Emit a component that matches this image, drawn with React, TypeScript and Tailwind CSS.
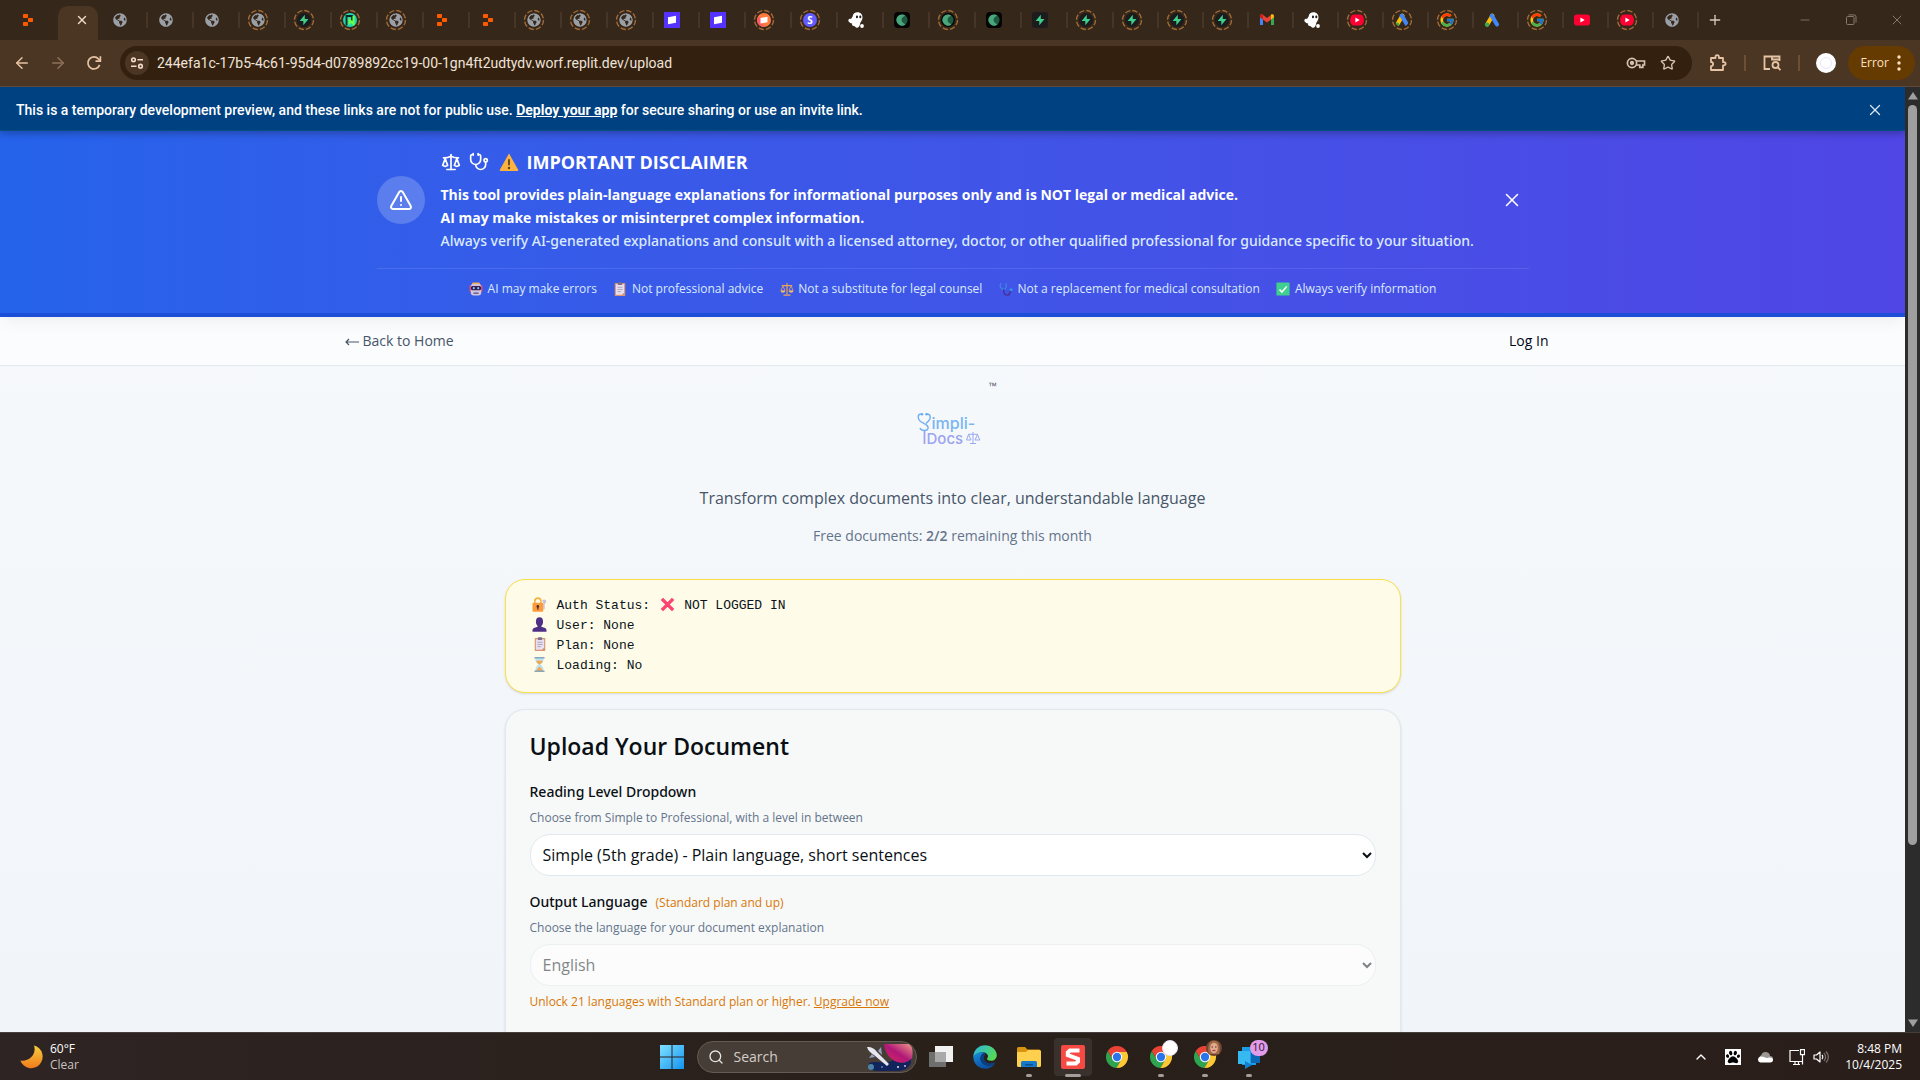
import React from "react";
import {
  ArrowLeft,
  ArrowRight,
  ChevronUp,
  Minus,
  Plus,
  Scale,
  Search,
  Star,
  Stethoscope,
  TriangleAlert,
  X,
} from "lucide-react";
import { FaGlobeAmericas, FaPaw } from "react-icons/fa";
import { FcGoogle } from "react-icons/fc";

/* ---------- favicons ---------- */

function Replit() {
  return (
    <svg viewBox="0 0 16 16" className="size-4" fill="#ff5a00">
      <rect x="3" y="2" width="5" height="4" rx="0.8" />
      <rect x="8" y="6" width="5" height="4" rx="0.8" />
      <rect x="3" y="10" width="5" height="4" rx="0.8" />
    </svg>
  );
}

function Globe() {
  return <FaGlobeAmericas className="size-[14px] text-[#9ba0a7]" />;
}

function Bolt() {
  return (
    <svg viewBox="0 0 16 16" className="size-4">
      <rect width="16" height="16" rx="3" fill="#1c1c1c" />
      <path d="M8.8 2.8 3.6 8.9h3.7v4.4l5.2-6.2H8.8z" fill="#3ecf8e" />
    </svg>
  );
}

function Neon() {
  return (
    <svg viewBox="0 0 16 16" className="size-4" fill="none">
      <circle cx="8" cy="8" r="8" fill="#1fd5b0" />
      <path d="M4.500 13.500V4h5.500v4.500" stroke="#0d2a22" strokeWidth="1.800" />
      <path d="M7.500 12.500V8l4 4V4" stroke="#6dff45" strokeWidth="2" />
    </svg>
  );
}

function Violet() {
  return (
    <svg viewBox="0 0 16 16" className="size-4">
      <rect width="16" height="16" fill="#5533ff" />
      <path d="M4 5.300 12 3.800v7L4 12.300z" fill="#fff" />
    </svg>
  );
}

function Orange() {
  return (
    <svg viewBox="0 0 16 16" className="size-4">
      <circle cx="8" cy="8" r="8" fill="#ff7a3c" />
      <path d="M2 4a8 8 0 0 0 6 12L6 8z" fill="#ff5a6a" />
      <path d="M4.500 6 11.500 4.700v5.600l-7 1.300z" fill="#fff" />
    </svg>
  );
}

function SLetter() {
  return (
    <span className="flex size-4 items-center justify-center bg-[#635bff] text-[10px] leading-none font-bold text-white">S</span>
  );
}

function Ghost() {
  return (
    <svg viewBox="0 0 16 16" className="size-4">
      <path d="M4.600 4.500C5 1.500 7 .3 9.500.3c3 0 5 2.200 5 5.200 0 3-2 4-2.500 6.500-.5 2.500-1.500 3.700-3 3.700-1.600 0-2-1.700-3.200-1.700-1.300 0-2.300-1-1.600-2.500C2.500 11.400.3 10.200.3 8.600c0-1.700 1.700-2 2.700-1.700z" fill="#fff" />
      <circle cx="14" cy="14" r="1.900" fill="#fff" />
      <rect x="8" y="3.600" width="2" height="2.600" rx="0.900" fill="#222" />
      <rect x="11.300" y="3.600" width="2" height="2.600" rx="0.900" fill="#222" />
    </svg>
  );
}

function Moonlet() {
  return (
    <svg viewBox="0 0 16 16" className="size-4">
      <rect width="16" height="16" rx="4" fill="#050505" />
      <circle cx="8" cy="8" r="5.600" fill="#1d5a40" />
      <path d="M8 2.400a5.600 5.600 0 1 0 3.500 10C8.500 11 7.500 9.500 7.500 7.800S8.800 4.500 11.300 3.400A5.600 5.600 0 0 0 8 2.400" fill="#4aa77c" />
    </svg>
  );
}

function Gmail() {
  return (
    <svg viewBox="0 0 16 16" className="size-4">
      <path d="M1 4v9h3V7.200z" fill="#4285f4" />
      <path d="M15 4v9h-3V7.200z" fill="#34a853" />
      <path d="M1 5V3.600c0-1.300 1.500-1.900 2.500-1.100L8 6l4.500-3.500V7.200L8 10.500 3.500 7.200z" fill="#ea4335" />
      <path d="M12 7.500V2.700c1.200-1 3-.3 3 1.300v1.200z" fill="#fbbc04" />
      <path d="M4 7.500V2.700C2.800 1.700 1 2.400 1 4v1.200z" fill="#c5221f" />
    </svg>
  );
}

function Ads() {
  return (
    <svg viewBox="0 0 16 16" className="size-4">
      <path d="M8.400 3.700 3.200 12.500" stroke="#fbbc04" strokeWidth="4.200" strokeLinecap="round" />
      <path d="m7.800 3.700 5.200 8.800" stroke="#4285f4" strokeWidth="4.200" strokeLinecap="round" />
      <circle cx="3.100" cy="12.600" r="2.200" fill="#34a853" />
    </svg>
  );
}

function YouTube() {
  return (
    <svg viewBox="0 0 16 16" className="size-4">
      <rect y="2.400" width="16" height="11.200" rx="2.800" fill="#ff0033" />
      <path d="m6.400 5.600 4.300 2.400-4.300 2.400z" fill="#fff" />
    </svg>
  );
}

/* ---------- browser chrome ---------- */

type Tab = { icon: React.ComponentType; ring?: boolean };

const wideTabs: Tab[] = [
  { icon: Globe },
  { icon: Globe },
  { icon: Globe },
  { icon: Globe, ring: true },
  { icon: Bolt, ring: true },
  { icon: Neon, ring: true },
  { icon: Globe, ring: true },
  { icon: Replit },
  { icon: Replit },
  { icon: Globe, ring: true },
  { icon: Globe, ring: true },
  { icon: Globe, ring: true },
  { icon: Violet },
  { icon: Violet },
  { icon: Orange, ring: true },
  { icon: SLetter, ring: true },
  { icon: Ghost },
  { icon: Moonlet },
  { icon: Moonlet, ring: true },
  { icon: Moonlet },
  { icon: Bolt },
  { icon: Bolt, ring: true },
];

const narrowTabs: Tab[] = [
  { icon: Bolt, ring: true },
  { icon: Bolt, ring: true },
  { icon: Bolt, ring: true },
  { icon: Gmail },
  { icon: Ghost },
  { icon: YouTube, ring: true },
  { icon: Ads, ring: true },
  { icon: FcGoogle, ring: true },
  { icon: Ads },
  { icon: FcGoogle, ring: true },
  { icon: YouTube },
  { icon: YouTube, ring: true },
  { icon: Globe },
];

function TabButton({ tab, narrow }: { tab: Tab; narrow?: boolean }) {
  const Icon = tab.icon;
  return (
    <button
      type="button"
      aria-label="Tab"
      className={`flex h-5 shrink-0 items-center justify-between pl-2 ${narrow ? "w-[45px]" : "w-[46px]"}`}
    >
      <span className="relative flex size-5 items-center justify-center">
        <span className={`flex items-center justify-center ${tab.ring ? "size-4 rounded-full [clip-path:circle(7px)]" : "size-4"}`}>
          <Icon />
        </span>
        {tab.ring && (
          <svg viewBox="0 0 22 22" className="absolute -inset-px size-[22px]" fill="none">
            <circle cx="11" cy="11" r="9.500" stroke="#a06a38" strokeWidth="1.400" strokeDasharray="5.500 1.960" />
          </svg>
        )}
      </span>
      <span className="h-4 w-[2px] bg-[#453629]" />
    </button>
  );
}

function TabStrip() {
  return (
    <div className="flex h-10 shrink-0 items-center bg-[#35271a]">
      <button type="button" aria-label="Tab" className="flex h-10 w-[58px] shrink-0 items-center pl-5">
        <Replit />
      </button>
      <div className="flex h-10 w-10 shrink-0 items-end">
        <div className="flex h-[34px] w-10 items-center justify-center rounded-t-[10px] bg-[#4b3624] pb-[6px] pl-2">
          <button type="button" aria-label="Close tab" className="text-[#f0d9c4]">
            <X className="size-[14px]" strokeWidth={2.5} />
          </button>
        </div>
      </div>
      <div className="flex min-w-0 flex-1 items-center pl-1">
        {wideTabs.map((t, i) => (
          <TabButton key={i} tab={t} />
        ))}
        {narrowTabs.map((t, i) => (
          <TabButton key={i} tab={t} narrow />
        ))}
        <button type="button" aria-label="New tab" className="ml-2 shrink-0 text-[#d9cabc]">
          <Plus className="size-4" />
        </button>
      </div>
      <div className="flex shrink-0 text-[#85786c]">
        <button type="button" aria-label="Minimize" className="flex w-[46px] items-center justify-center">
          <Minus className="size-[14px]" strokeWidth={1.5} />
        </button>
        <button type="button" aria-label="Restore" className="flex w-[46px] items-center justify-center">
          <svg viewBox="0 0 12 12" className="size-3" fill="none" stroke="currentColor">
            <rect x="1.500" y="2.500" width="7.500" height="8" rx="1" />
            <path d="M3.500.9h5.500a2 2 0 0 1 2 2v5.600" />
          </svg>
        </button>
        <button type="button" aria-label="Close" className="flex w-[46px] items-center justify-center">
          <X className="size-4" strokeWidth={1.5} />
        </button>
      </div>
    </div>
  );
}

function Toolbar() {
  return (
    <div className="flex h-[47px] shrink-0 items-center border-b border-[#5f4a3a] bg-[#4b3624] text-[#e6c3a5]">
      <div className="flex w-[120px] shrink-0 items-center gap-[18px] pl-[13px]">
        <button type="button" aria-label="Back">
          <ArrowLeft className="size-[18px]" />
        </button>
        <button type="button" aria-label="Forward" className="text-[#8f7059]">
          <ArrowRight className="size-[18px]" />
        </button>
        <button type="button" aria-label="Reload">
          <svg viewBox="0 0 24 24" className="size-[18px]" fill="none" stroke="currentColor" strokeWidth="2.300">
            <path d="M19.500 14.500A8 8 0 1 1 18 6.700l2 2.300" />
            <path d="M20.500 3v6.500H14" />
          </svg>
        </button>
      </div>
      <div className="flex h-[34px] min-w-0 flex-1 items-center rounded-full bg-[#33200f] pr-4 pl-[5px]">
        <button type="button" aria-label="Site information" className="flex size-6 shrink-0 items-center justify-center rounded-full bg-[#4b3624] text-[#f3dcc8]">
          <svg viewBox="0 0 14 14" className="size-[14px]" fill="none" stroke="currentColor" strokeWidth="1.600">
            <circle cx="3.500" cy="3.800" r="1.800" />
            <path d="M7.500 3.800H13M1 10.200h5.500" />
            <circle cx="10.500" cy="10.200" r="1.800" />
          </svg>
        </button>
        <input
          aria-label="Address"
          readOnly
          value="244efa1c-17b5-4c61-95d4-d0789892cc19-00-1gn4ft2udtydv.worf.replit.dev/upload"
          className="ml-2 min-w-0 flex-1 bg-transparent font-[Roboto] text-sm text-[#efe3d8] outline-none"
        />
        <div className="flex items-center gap-[14px] text-[#d9c3b0]">
          <svg viewBox="0 0 20 14" className="h-[14px] w-5" fill="none" stroke="currentColor" strokeWidth="1.700">
            <circle cx="6" cy="7" r="4.600" />
            <circle cx="6" cy="7" r="1.300" fill="currentColor" />
            <path d="M10 5h8.500v4h-1.700v2.300h-3V9H10" />
          </svg>
          <Star className="size-4" strokeWidth={2} />
        </div>
      </div>
      <div className="flex shrink-0 items-center pr-[5px]">
        <svg viewBox="0 0 18 18" className="ml-[17px] size-[18px]" fill="none" stroke="currentColor" strokeWidth="1.800">
          <path d="M2 4h4.500V2.800a1.700 1.700 0 0 1 3.400 0V4H14v4.200h1a1.600 1.600 0 0 1 0 3.200h-1V16H2v-3.800c2.800 0 2.800-4.200 0-4.200z" strokeLinejoin="round" />
        </svg>
        <span className="ml-[17px] h-4 w-[2px] bg-[#6c4f36]" />
        <svg viewBox="0 0 18 18" className="ml-[17px] size-[18px]" fill="none" stroke="currentColor" strokeWidth="1.800">
          <path d="M7 15H1.500V2.500h15V7M9 2.500v3h7" />
          <circle cx="12.500" cy="11" r="3" />
          <path d="m14.700 13.200 2.800 3" />
        </svg>
        <span className="ml-[17px] h-4 w-[2px] bg-[#6c4f36]" />
        <span className="ml-4 flex size-5 items-center justify-center rounded-full bg-white">
          <span className="size-3 rounded-full border border-[#ebe6fb]" />
        </span>
        <button type="button" className="ml-3 flex h-[34px] items-center gap-2 rounded-full bg-[#663b02] pr-[14px] pl-3 text-xs text-[#ffe0c2]">
          Error
          <svg viewBox="0 0 4 16" className="h-4 w-1" fill="currentColor">
            <circle cx="2" cy="2" r="1.700" />
            <circle cx="2" cy="8" r="1.700" />
            <circle cx="2" cy="14" r="1.700" />
          </svg>
        </button>
      </div>
    </div>
  );
}

/* ---------- small pictograms ---------- */

function WarningSign() {
  return (
    <svg viewBox="0 0 20 20" className="size-5">
      <path d="M10 1.500 19.300 18a1 1 0 0 1-.9 1H1.600a1 1 0 0 1-.9-1z" fill="#ffb23e" />
      <rect x="9.100" y="7" width="1.800" height="6.500" rx="0.900" fill="#5d4422" />
      <circle cx="10" cy="16" r="1.200" fill="#5d4422" />
    </svg>
  );
}

function Robot() {
  return (
    <svg viewBox="0 0 16 16" className="size-[14px]">
      <rect x="3.500" y="0.500" width="9" height="4" rx="1.500" fill="#f9a83c" />
      <rect x="0.500" y="3.500" width="15" height="8" rx="1.500" fill="#e8406b" />
      <rect x="2" y="2" width="12" height="13.500" rx="3.500" fill="#cfc3de" />
      <rect x="2" y="4.500" width="12" height="5" rx="2" fill="#35204f" />
      <circle cx="5.500" cy="7" r="1.200" fill="#7cc7ff" />
      <circle cx="10.500" cy="7" r="1.200" fill="#7cc7ff" />
      <rect x="5" y="12" width="6" height="1.500" rx="0.700" fill="#5b4778" />
    </svg>
  );
}

function Clipboard() {
  return (
    <svg viewBox="0 0 16 16" className="size-[14px]">
      <rect x="2" y="1" width="12" height="15" rx="1" fill="#d99471" />
      <path d="M3.300 2.500h9.400V12l-2.500 2.700H3.300z" fill="#e9e0ef" />
      <rect x="5.500" y="0.300" width="5" height="3.200" rx="0.800" fill="#7c6f8b" />
      <path d="M5 6h6M5 8.500h6M5 11h4" stroke="#a79ab8" strokeWidth="1" />
    </svg>
  );
}

function Balance() {
  return (
    <svg viewBox="0 0 16 16" className="size-[14px]" fill="none" stroke="#e9a55b" strokeWidth="1.300">
      <path d="M8 1v13M2 4.200h12M4 15h8" />
      <path d="M3.300 4.500 1 10h4.700zM12.700 4.500 10.300 10H15z" strokeWidth="0.900" />
      <path d="M.7 10h5.200a2.600 2.200 0 0 1-5.200 0M10.100 10h5.200a2.600 2.200 0 0 1-5.200 0" fill="#f4bd65" stroke="none" />
    </svg>
  );
}

function StethoscopeMark() {
  return (
    <svg viewBox="0 0 16 16" className="size-[14px]" fill="none" strokeWidth="1.500">
      <path d="M2.500 1.500C0 4 2 8 5 8.500S9.500 4 7.500 1.500" stroke="#3c86e6" />
      <path d="M5.500 8.500c-.5 4 1 6.500 4 6.500 3.500 0 2.500-4 4-5" stroke="#4a2f9a" strokeWidth="1.700" />
      <circle cx="13.800" cy="8.800" r="1.700" fill="#2f96e8" />
    </svg>
  );
}

function CheckMark() {
  return (
    <svg viewBox="0 0 16 16" className="size-[14px]">
      <rect x="0.500" y="0.500" width="15" height="15" rx="1" fill="#3fd08f" />
      <path d="m4 8.500 2.800 3L12.300 5" fill="none" stroke="#fff" strokeWidth="1.700" />
    </svg>
  );
}

function Lock() {
  return (
    <svg viewBox="0 0 16 16" className="size-[15px]">
      <path d="M11 3.500a2.300 2.300 0 1 1 2.500 3.600V13H12V6z" fill="#c9bedb" />
      <path d="M3 7V4.500a3.300 3.300 0 0 1 6.600 0V7" fill="none" stroke="#f6b13f" strokeWidth="1.700" />
      <rect x="0.500" y="6.200" width="11.500" height="9.500" rx="1.300" fill="#fb9b3c" />
      <circle cx="6.200" cy="10" r="1.400" fill="#4c2a3c" />
      <rect x="5.600" y="10" width="1.300" height="3.500" fill="#4c2a3c" />
    </svg>
  );
}

function Bust() {
  return (
    <svg viewBox="0 0 16 16" className="size-[15px]" fill="#4d2f86">
      <ellipse cx="8" cy="5" rx="3.800" ry="4.700" />
      <path d="M6 8h4v2.500l4 1.200c1 .4 1.500 1.200 1.500 4H.500c0-2.800.5-3.600 1.500-4l4-1.200z" />
    </svg>
  );
}

function Hourglass() {
  return (
    <svg viewBox="0 0 16 16" className="size-[15px]">
      <path d="M3.500 1h9c0 4-1.500 5.500-3.500 7 2 1.500 3.500 3 3.500 7h-9c0-4 1.500-5.500 3.500-7-2-1.500-3.500-3-3.500-7" fill="#bfe0ef" />
      <path d="M4.500 4h7C11 6 9.500 7 8 8 6.500 7 5 6 4.500 4M8 10l4 5H4z" fill="#f0a848" />
      <rect x="2.500" width="11" height="1.700" rx="0.500" fill="#8aa6ba" />
      <rect x="2.500" y="14.300" width="11" height="1.700" rx="0.500" fill="#8aa6ba" />
    </svg>
  );
}

function Cross() {
  return (
    <svg viewBox="0 0 16 16" className="size-[15px]">
      <path d="m2 2 12 12M14 2 2 14" stroke="#fb4570" strokeWidth="3.600" />
    </svg>
  );
}

function Glyph({ children }: { children: React.ReactNode }) {
  return <span className="flex w-[18px] items-start justify-center pt-px">{children}</span>;
}

/* ---------- page ---------- */

function PreviewBanner() {
  return (
    <div className="relative flex h-11 items-center justify-between border-b border-[#06507f] bg-[#004182] px-4 pt-[2px] text-white shadow-[0_2px_8px_rgba(0,0,0,0.3)]">
      <p className="font-[Roboto] text-sm font-medium">
        This is a temporary development preview, and these links are not for public use.{" "}
        <a href="#deploy" className="font-bold underline">
          Deploy your app
        </a>{" "}
        for secure sharing or use an invite link.
      </p>
      <button type="button" aria-label="Dismiss banner" className="mr-[5px] text-[#dbe7f3]">
        <X className="size-[18px]" strokeWidth={1.7} />
      </button>
    </div>
  );
}

const notices = [
  { icon: Robot, text: "AI may make errors" },
  { icon: Clipboard, text: "Not professional advice" },
  { icon: Balance, text: "Not a substitute for legal counsel" },
  { icon: StethoscopeMark, text: "Not a replacement for medical consultation" },
  { icon: CheckMark, text: "Always verify information" },
];

function Disclaimer() {
  return (
    <section className="border-b-4 border-[#1d4ed8] bg-linear-to-r from-[#2563eb] to-[#4f46e5] py-4 text-white shadow-lg">
      <div className="mx-auto max-w-6xl">
        <div className="flex items-center gap-4">
          <span className="flex size-12 shrink-0 items-center justify-center rounded-full bg-white/20">
            <TriangleAlert className="size-6" />
          </span>
          <div className="min-w-0 flex-1">
            <div className="mb-[7px] flex items-center gap-2 pt-px">
              <Scale className="size-5" />
              <Stethoscope className="size-5" />
              <h1 className="ml-[2px] flex items-center gap-2 text-lg leading-7 font-bold">
                <WarningSign />
                IMPORTANT DISCLAIMER
              </h1>
            </div>
            <p className="text-sm leading-[23px] font-bold">
              This tool provides plain-language explanations for informational purposes only and is NOT legal or medical advice.
              <br />
              AI may make mistakes or misinterpret complex information.
            </p>
            <p className="font-[Noto_Sans] text-sm leading-[23px] font-medium text-[#dbeafe]">
              Always verify AI-generated explanations and consult with a licensed attorney, doctor, or other qualified professional for guidance specific to your situation.
            </p>
          </div>
          <button type="button" aria-label="Dismiss disclaimer" className="shrink-0 p-[6px]">
            <X className="size-[22px]" strokeWidth={1.7} />
          </button>
        </div>
        <ul className="mt-4 flex flex-wrap justify-center gap-4 border-t border-white/10 pt-3 text-xs leading-4 text-[#dbeafe]">
          {notices.map(({ icon: Icon, text }) => (
            <li key={text} className="flex items-center gap-1">
              <span className="flex w-[15px] justify-center">
                <Icon />
              </span>
              {text}
            </li>
          ))}
        </ul>
      </div>
    </section>
  );
}

function SiteNav() {
  return (
    <nav className="border-b border-[#e2e8f0] bg-white/60">
      <div className="mx-auto flex h-12 max-w-7xl items-center justify-between px-8 text-sm">
        <a href="#home" className="flex items-center gap-1 text-[#475569]">
          <svg viewBox="0 0 14 10" className="h-[10px] w-[14px]" fill="none" stroke="currentColor" strokeWidth="1.200">
            <path d="M14 6H1M4 3 1 6l3 3" />
          </svg>
          Back to Home
        </a>
        <a href="#login" className="px-3 text-[#020617]">
          Log In
        </a>
      </div>
    </nav>
  );
}

function Logo() {
  return (
    <svg viewBox="0 0 64 38" className="h-[38px] w-16" role="img" aria-label="Simpli-Docs" fill="none">
      <path d="M4 2C.5 2 .5 6.500 3 9c2.500 2.300 7 3 8 6 .6 2.200-1.200 3.500-3.500 3.500S3.500 17.500 3 16" stroke="#74b2ee" strokeWidth="1.500" />
      <path d="M10 2c4 0 4 4.500 1.500 7L9 11.500" stroke="#74b2ee" strokeWidth="1.500" />
      <circle cx="5" cy="2.200" r="1.200" fill="#66aaf0" />
      <circle cx="9.500" cy="2.200" r="1.200" fill="#66aaf0" />
      <path d="M7.500 18.500V32" stroke="#9aa4ef" strokeWidth="1.800" />
      <text x="14.500" y="17" fontFamily="Inter" fontWeight="500" fontSize="16" fill="#7ab5ef">
        impli-
      </text>
      <text x="9.500" y="32" fontFamily="Inter" fontWeight="500" fontSize="15" fill="#9aa4ef">
        Docs
      </text>
      <g stroke="#9aa9ef" strokeWidth="1">
        <path d="M56 20v11M51 22.300h10M53 31.500h6M51.500 22.500l-2 5.500h4.500zM60.500 22.500l-2.500 5.500h4.800z" />
      </g>
    </svg>
  );
}

function AuthBox() {
  return (
    <section className="rounded-[20px] border border-[#fde047] bg-[#fefce8] px-6 py-4 font-[Liberation_Mono] text-[13px] leading-5 text-[#0b1220] shadow-sm">
      <p className="flex gap-2 pl-px">
        <Glyph><Lock /></Glyph>
        <span>Auth Status:</span>
        <Glyph><Cross /></Glyph>
        <span>NOT LOGGED IN</span>
      </p>
      <p className="flex gap-2 pl-px">
        <Glyph><Bust /></Glyph>
        <span>User: None</span>
      </p>
      <p className="flex gap-2 pl-px">
        <Glyph><Clipboard /></Glyph>
        <span>Plan: None</span>
      </p>
      <p className="flex gap-2 pl-px">
        <Glyph><Hourglass /></Glyph>
        <span>Loading: No</span>
      </p>
    </section>
  );
}

function UploadCard() {
  return (
    <section className="mt-4 rounded-[20px] border border-[#e2e8f0] bg-[#f7f9f8] px-6 pt-5 pb-16 shadow-sm">
      <h2 className="text-[23px] leading-8 font-semibold text-[#0a0f14]">Upload Your Document</h2>
      <div className="mt-5">
        <label htmlFor="level" className="block font-[Noto_Sans] text-sm leading-5 font-medium text-[#0a0f14]">
          Reading Level Dropdown
        </label>
        <p className="mt-2 text-xs leading-4 text-[#64748b]">Choose from Simple to Professional, with a level in between</p>
        <select id="level" className="mt-2 block h-[42px] w-full rounded-[20px] border border-[#e2e8f0] bg-white px-2 text-base text-[#0a0f14]">
          <option>Simple (5th grade) - Plain language, short sentences</option>
          <option>Professional</option>
        </select>
      </div>
      <div className="mt-4">
        <label htmlFor="language" className="block font-[Noto_Sans] text-sm leading-5 font-medium text-[#0a0f14]">
          Output Language
          <span className="ml-2 font-['Open_Sans'] text-xs font-normal text-[#d97706]">(Standard plan and up)</span>
        </label>
        <p className="mt-2 text-xs leading-4 text-[#64748b]">Choose the language for your document explanation</p>
        <select id="language" disabled className="mt-2 block h-[42px] w-full rounded-[20px] border border-[#e2e8f0] bg-white px-2 text-base text-[#0a0f14] opacity-50">
          <option>English</option>
        </select>
        <p className="mt-2 text-xs leading-4 text-[#d97706]">
          Unlock 21 languages with Standard plan or higher.{" "}
          <a href="#upgrade" className="underline">
            Upgrade now
          </a>
        </p>
      </div>
    </section>
  );
}

function Scrollbar() {
  return (
    <div className="flex w-[15px] shrink-0 flex-col items-center bg-[#2c2c2c] py-[5px]" aria-hidden="true">
      <svg viewBox="0 0 10 8" className="h-2 w-[10px]" fill="#9f9f9f">
        <path d="M5 0 10 7.500H0z" />
      </svg>
      <div className="mt-[5px] flex w-full flex-1 flex-col items-center">
        <div className="w-[9px] flex-[81] rounded-full bg-[#9f9f9f]" />
        <div className="flex-[19]" />
      </div>
      <svg viewBox="0 0 10 8" className="h-2 w-[10px]" fill="#9f9f9f">
        <path d="M5 8 0 .5h10z" />
      </svg>
    </div>
  );
}

/* ---------- taskbar ---------- */

function Chrome() {
  return (
    <svg viewBox="0 0 48 48" className="size-6">
      <path d="M24 14 43.600 14A22 22 0 0 0 5.540 12.030L15.340 29A10 10 0 0 1 24 14z" fill="#ea4335" />
      <path d="M15.340 29 5.540 12.030A22 22 0 0 0 22.860 45.970L32.660 29A10 10 0 0 1 15.340 29z" fill="#2fa44f" />
      <path d="M32.660 29 22.860 45.970A22 22 0 0 0 43.600 14L24 14A10 10 0 0 1 32.660 29z" fill="#fcc934" />
      <circle cx="24" cy="24" r="10.500" fill="#fff" />
      <circle cx="24" cy="24" r="8.300" fill="#2a75e8" />
    </svg>
  );
}

function Edge() {
  return (
    <svg viewBox="0 0 24 24" className="size-6">
      <defs>
        <linearGradient id="edgeTop" x1="0" y1="0" x2="1" y2="0.500">
          <stop offset="0" stopColor="#2bb5ea" />
          <stop offset="1" stopColor="#54d958" />
        </linearGradient>
        <linearGradient id="edgeLow" x1="0" y1="0" x2="0.400" y2="1">
          <stop offset="0" stopColor="#1790dd" />
          <stop offset="1" stopColor="#0b4fa0" />
        </linearGradient>
      </defs>
      <path d="M.3 12C.5 5 5.500.2 12 .2S23.800 5 23.800 10c0 3.500-2.500 5.800-5.800 5.800-2.500 0-4-.9-4-1.700 0-.7 1-1 1-2.800C15 9 12.500 7.200 9.500 7.200 5.500 7.200 2 9.500.3 12" fill="url(#edgeTop)" />
      <path d="M.3 12c1-3 4.700-4.800 9.200-4.800 1 0 1.800.2 2.500.6C9 8.300 7.500 11 7.500 13.500c0 4 3.500 7 8 7 2.500 0 4.500-.8 6.300-2.300C20 21.500 16.500 23.800 12 23.800 5.500 23.800.2 18.500.3 12" fill="url(#edgeLow)" />
      <path d="M12 7.800C9.300 8.500 7.500 11 7.500 13.500c0 4 3.500 7 8 7 2.500 0 4.800-.8 6.300-2.300.3-.5 0-.9-.6-.6-5 2-10.200-.4-10.200-5.100 0-2 1.500-3.300 1.500-3.300z" fill="#0a3f86" />
    </svg>
  );
}

function TaskButton({
  label,
  mark,
  active,
  children,
}: {
  label: string;
  mark?: boolean;
  active?: boolean;
  children: React.ReactNode;
}) {
  return (
    <button
      type="button"
      aria-label={label}
      className={`relative mx-[3px] flex h-[38px] w-[38px] items-center justify-center rounded ${active ? "bg-white/8" : ""}`}
    >
      {children}
      {mark && <span className={`absolute -bottom-px left-1/2 h-[3px] -translate-x-1/2 rounded-full bg-[#a39d9b] ${active ? "w-4" : "w-[6px]"}`} />}
    </button>
  );
}

function Taskbar() {
  return (
    <footer className="grid h-12 shrink-0 grid-cols-[1fr_auto_1fr] items-center border-t border-[#45403d] bg-linear-to-r from-[#2e2423] via-[#29201a] to-[#2a1e1b] text-xs text-white">
      <div className="flex items-center gap-[6px] pl-5">
        <svg viewBox="0 0 24 24" className="size-6">
          <defs>
            <linearGradient id="moon" x1="0" y1="0" x2="0" y2="1">
              <stop offset="0" stopColor="#f7cf3c" />
              <stop offset="1" stopColor="#ef7b1d" />
            </linearGradient>
          </defs>
          <path d="M14 .5A11.500 11.500 0 1 1 .3 15.500C9 17 17 9.500 14 .5" fill="url(#moon)" />
        </svg>
        <div className="leading-4">
          <p>60°F</p>
          <p className="text-[#c9c3c0]">Clear</p>
        </div>
      </div>

      <div className="flex items-center">
        <TaskButton label="Start">
          <svg viewBox="0 0 24 24" className="size-6">
            <defs>
              <linearGradient id="win" x1="0" y1="0" x2="1" y2="1">
                <stop offset="0" stopColor="#7fe0ff" />
                <stop offset="1" stopColor="#1394f2" />
              </linearGradient>
            </defs>
            <path d="M0 0h11.500v11.500H0zM12.500 0H24v11.500H12.500zM0 12.500h11.500V24H0zM12.500 12.500H24V24H12.500z" fill="url(#win)" />
          </svg>
        </TaskButton>
        <label className="mr-[2px] ml-[3px] flex h-8 w-[220px] items-center overflow-hidden rounded-full border border-[#655b55] bg-[#473d37] pr-[2px] pl-[10px]">
          <Search className="size-4 text-[#e8e4e1]" />
          <input
            type="search"
            placeholder="Search"
            aria-label="Search"
            className="ml-[10px] min-w-0 flex-1 bg-transparent text-sm outline-none placeholder:text-[#d3cdc9]"
          />
          <svg viewBox="0 0 48 28" className="h-7 w-12">
            <defs>
              <linearGradient id="planet" x1="0" y1="1" x2="1" y2="0">
                <stop offset="0" stopColor="#e0245e" />
                <stop offset="0.500" stopColor="#b01878" />
                <stop offset="1" stopColor="#f29a8a" />
              </linearGradient>
            </defs>
            <path d="M3 20c8-3 14 2 22-2s14-4 20-2v4c-3 6-8 8-14 8H10c-4 0-7-3-7-8" fill="#12245c" />
            <circle cx="5" cy="24" r="3" fill="#4c83a6" />
            <path d="M18 1h26c3 4 3 9 2 14-3 4-9 6-15 4-8-3-12-10-13-18" fill="url(#planet)" />
            <path d="M1 4c5 0 8 2 10 5l12 12-2 2L8 12C5 10 2 8 1 4" fill="#e6e8f1" />
            <path d="m6 11-3 4 6-1zM12 8l3-4 1 8z" fill="#98a2bd" />
            <circle cx="32" cy="24" r="0.900" fill="#fff" />
            <circle cx="39" cy="23" r="0.900" fill="#e9c4ee" />
            <circle cx="16" cy="24" r="0.800" fill="#9cc5f2" />
          </svg>
        </label>
        <TaskButton label="Task view">
          <svg viewBox="0 0 24 24" className="size-6">
            <rect x="6" y="1" width="18" height="16" fill="#f1f1f1" />
            <rect x="0" y="7" width="17" height="15" fill="#6f6f6f" />
            <rect x="6" y="7" width="11" height="10" fill="#a9a9a9" />
          </svg>
        </TaskButton>
        <TaskButton label="Edge">
          <Edge />
        </TaskButton>
        <TaskButton label="File Explorer" mark>
          <svg viewBox="0 0 24 24" className="size-6">
            <path d="M0 3.500A1.500 1.500 0 0 1 1.500 2H8l2.500 2.500H22A1.500 1.500 0 0 1 23.500 6v4H0z" fill="#d9940f" />
            <path d="M0 7h9l2-2h11.500A1.500 1.500 0 0 1 24 6.500v14a1.500 1.500 0 0 1-1.500 1.500h-21A1.500 1.500 0 0 1 0 20.500z" fill="#ffd04d" />
            <path d="M4 22v-4.500A1.500 1.500 0 0 1 5.500 16h13a1.500 1.500 0 0 1 1.500 1.500V22z" fill="#1878c9" />
            <rect x="8" y="19" width="8" height="1.500" rx="0.700" fill="#0c4f91" />
          </svg>
        </TaskButton>
        <TaskButton label="Snagit" mark active>
          <svg viewBox="0 0 24 24" className="size-6">
            <rect width="24" height="24" rx="2" fill="#f74a45" />
            <path d="M18.500 5.500H9L6.800 7.500v2.700L17 13.800v2.700l-2.200 2H5.500" fill="none" stroke="#fff" strokeWidth="4" />
          </svg>
        </TaskButton>
        <TaskButton label="Chrome">
          <Chrome />
        </TaskButton>
        <TaskButton label="Chrome, first profile" mark>
          <Chrome />
          <span className="absolute top-[2px] right-[2px] size-4 rounded-full border border-[#e5e0f2] bg-white" />
        </TaskButton>
        <TaskButton label="Chrome, second profile" mark>
          <Chrome />
          <svg viewBox="0 0 16 16" className="absolute top-[2px] right-[2px] size-4">
            <circle cx="8" cy="8" r="8" fill="#6d4331" />
            <path d="M4 2.500C6 0 11 .5 12.500 3S14 11 13 14H3C1.500 10 2 5 4 2.500" fill="#a46a45" />
            <ellipse cx="8" cy="8" rx="3.800" ry="5.200" fill="#e0aa8e" />
            <path d="M6.500 10.500h3" stroke="#a83c45" strokeWidth="1.200" />
            <path d="M5.500 7h1.500M9 7h1.500" stroke="#4b2b20" strokeWidth="0.900" />
          </svg>
        </TaskButton>
        <TaskButton label="Phone Link" mark>
          <svg viewBox="0 0 24 24" className="size-6">
            <path d="M5 2h14v18H5z" fill="#1c9be6" />
            <path d="M1 6h12v13H1z" fill="#36b8f0" />
            <path d="M14 8h9v10h-9z" fill="#0c67b4" />
            <path d="m8 16 7 4-7 4z" fill="#1180d0" />
          </svg>
          <span className="absolute top-[2px] right-0 flex h-4 w-[18px] items-center justify-center rounded-full bg-[#e19be8] text-[11px] text-[#2b1630]">
            10
          </span>
        </TaskButton>
      </div>

      <div className="flex items-center justify-end gap-4 pr-[18px]">
        <ChevronUp className="size-4" />
        <span className="flex size-4 items-center justify-center bg-white">
          <FaPaw className="size-[14px] text-black" />
        </span>
        <svg viewBox="0 0 16 12" className="h-3 w-4">
          <path d="M4 11a4 4 0 0 1 .3-7A4.500 4.500 0 0 1 13 5a3 3 0 0 1 0 6z" fill="#9b9795" />
          <path d="M3.200 11.500a3 3 0 0 1 0-5.800C7 5 9 8 12 6.500c3-.3 4 1 4 2.500a2.700 2.700 0 0 1-2.700 2.500z" fill="#fff" />
        </svg>
        <div className="flex items-center gap-2">
          <svg viewBox="0 0 16 16" className="size-4" fill="none" stroke="#fff" strokeWidth="1.200">
            <path d="M10 1.500H1v11h12.500M4 15.500h7M6 12.500v3M9.500 12.500v3" />
            <path d="M11.500.600h4v5h-4zM13.500 5.500v10" />
          </svg>
          <svg viewBox="0 0 16 16" className="size-4" fill="none" stroke="#fff" strokeWidth="1.200">
            <path d="M1 6h2.500L7 3v10l-3.500-3H1zM9 6c1 1 1 3 0 4" strokeLinejoin="round" />
            <path d="M11 4c2 2.500 2 5.500 0 8M13 2.500c3 3.500 3 7.500 0 11" stroke="#7b736e" />
          </svg>
        </div>
        <div className="text-right leading-4">
          <p>8:48 PM</p>
          <p>10/4/2025</p>
        </div>
      </div>
    </footer>
  );
}

export default function App() {
  return (
    <div className="flex h-screen flex-col overflow-hidden font-['Open_Sans',sans-serif]">
      <TabStrip />
      <Toolbar />
      <div className="flex min-h-0 flex-1">
        <div className="min-w-0 flex-1 overflow-hidden bg-linear-to-b from-[#f8fafc] to-[#f1f5f9]">
          <PreviewBanner />
          <Disclaimer />
          <SiteNav />
          <main className="mx-auto max-w-4xl">
            <header className="flex flex-col items-center pt-3">
              <span className="self-center pl-20 font-[Liberation_Sans] text-[9px] leading-4 text-[#475569]">™</span>
              <div className="pt-[18px] pr-2">
                <Logo />
              </div>
              <p className="mt-9 text-base leading-6 text-[#475569]">Transform complex documents into clear, understandable language</p>
              <p className="mt-4 text-sm leading-5 text-[#64748b]">
                Free documents: <span className="font-semibold">2/2</span> remaining this month
              </p>
            </header>
            <div className="mt-[33px]">
              <AuthBox />
              <UploadCard />
            </div>
          </main>
        </div>
        <Scrollbar />
      </div>
      <Taskbar />
    </div>
  );
}
